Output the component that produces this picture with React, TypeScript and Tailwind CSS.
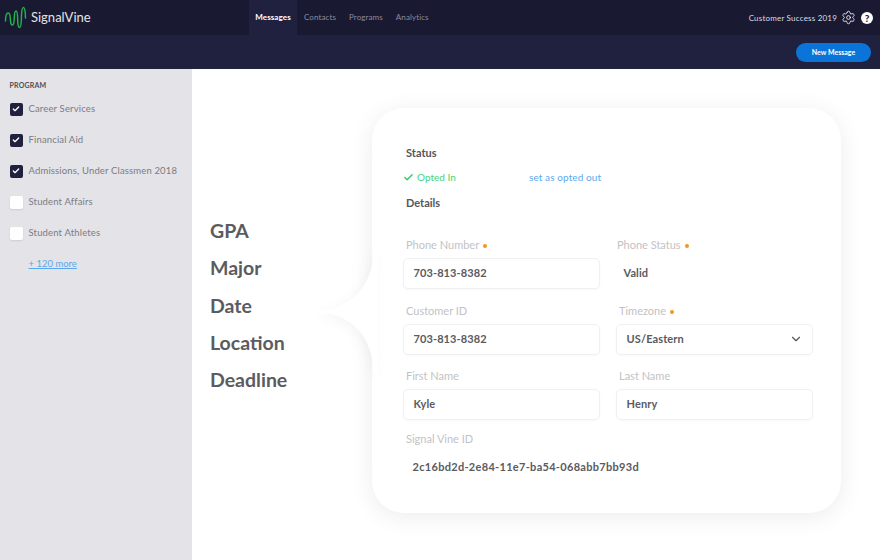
import { Check, ChevronDown, Settings } from 'lucide-react';

const font = { fontFamily: '"Lato", "Open Sans", sans-serif' };

const programs = [
  { name: 'Career Services', checked: true },
  { name: 'Financial Aid', checked: true },
  { name: 'Admissions, Under Classmen 2018', checked: true },
  { name: 'Student Affairs', checked: false },
  { name: 'Student Athletes', checked: false },
];

const tags = ['GPA', 'Major', 'Date', 'Location', 'Deadline'];

function Logo() {
  return (
    <svg width="24" height="24" viewBox="4 6 24 24" fill="none" className="shrink-0">
      <path
        d="M5.5 21 C5.5 15 7 13 8.3 13 C10.5 13 10.3 18 10.5 21 C10.7 24 11.3 25 12.3 25 C13.8 25 14.2 22 14.3 18 C14.4 13 14.8 11 16 11 C17.4 11 17.6 14 17.7 20 C17.8 25 18.3 27.5 19.5 27.5 C21 27.5 21.3 24 21.4 18 C21.5 11 22 7.5 23.5 7.5 C25 7.5 25.3 11 25.5 18"
        stroke="#22b14c"
        strokeWidth="1.5"
        strokeLinecap="round"
      />
    </svg>
  );
}

function Dot() {
  return <span className="ml-1 inline-block h-[4px] w-[4px] rounded-full bg-[#f7941d] align-middle" />;
}

function Field({ label, value, required, select, boxed = true, wide }: { label: string; value: string; required?: boolean; select?: boolean; boxed?: boolean; wide?: boolean }) {
  return (
    <div>
      <div className="mb-[6px] h-[14px] pl-[3px] text-[11px] leading-[14px] text-[#c2c2c6]">
        {label}
        {required && <Dot />}
      </div>
      <div className={`flex h-[31px] items-center justify-between rounded-[5px] pl-[9.5px] pr-[9px] text-[11px] font-bold text-[#5a5a5f] ${wide ? 'tracking-[0.3px]' : 'tracking-[0.1px]'} ${boxed ? 'border border-[#f0f0f2] shadow-[0_1px_2px_rgba(0,0,0,0.03)]' : ''}`}>
        {value}
        {select && <ChevronDown size={14} strokeWidth={2} className="text-[#55555a]" />}
      </div>
    </div>
  );
}

export default function App() {
  return (
    <div style={font} className="flex h-[560px] w-[880px] flex-col overflow-hidden bg-white">
      <header className="flex h-[35px] items-stretch bg-[#191932]">
        <div className="flex w-[249px] items-center gap-[3px] pl-[4px]">
          <Logo />
          <span className="text-[13px] text-[#e4e4e8]">SignalVine</span>
        </div>
        <nav className="flex items-stretch pb-[1px] text-[8px] tracking-[0.1px]">
          <a className="flex w-[48px] -mb-[1px] items-center justify-center bg-[#20203f] pb-[1px] font-bold text-white">Messages</a>
          <a className="ml-[7px] flex items-center text-[#8c8c9c]">Contacts</a>
          <a className="ml-[13px] flex items-center text-[#8c8c9c]">Programs</a>
          <a className="ml-[13px] flex items-center text-[#8c8c9c]">Analytics</a>
        </nav>
        <div className="ml-auto flex items-center pr-[7px]">
          <span className="text-[8px] tracking-[0.2px] text-[#dcdce2]">Customer Success 2019</span>
          <Settings size={15} strokeWidth={1.3} className="ml-[4px] text-white" />
          <span className="ml-[5px] flex h-[12px] w-[12px] items-center justify-center rounded-full bg-white text-[10px] leading-none font-black text-[#191932]">?</span>
        </div>
      </header>

      <div className="flex h-[34px] items-center justify-end bg-[#20203f] pr-[9px]">
        <button className="h-[19px] w-[75px] rounded-full bg-[#0a74d8] text-[7px] font-bold text-white">New Message</button>
      </div>

      <div className="flex min-h-0 flex-1">
        <aside className="w-[192px] shrink-0 bg-[#e3e3e8] pl-[9.5px] pt-[12px]">
          <div className="text-[7px] font-bold leading-[9px] tracking-[0.2px] text-[#4e4e55]">PROGRAM</div>
          <ul className="mt-[13px] flex flex-col gap-[19px]">
            {programs.map((p) => (
              <li key={p.name} className="flex h-[12px] items-center gap-[6px] text-[9.5px] tracking-[0.15px] text-[#7c7c82]">
                {p.checked ? (
                  <span className="flex h-[13px] w-[13px] items-center justify-center rounded-[2px] bg-[#20203f]">
                    <Check size={8} strokeWidth={4} className="text-white" />
                  </span>
                ) : (
                  <span className="h-[13px] w-[13px] rounded-[2px] bg-white shadow-[0_1px_2px_rgba(0,0,0,0.1)]" />
                )}
                {p.name}
              </li>
            ))}
          </ul>
          <a className="mt-[19px] ml-[19px] block text-[9.5px] leading-[12px] text-[#5aa9ee] underline">+ 120 more</a>
        </aside>

        <main className="flex flex-1 items-start">
          <ul className="mt-[151px] flex w-[180px] shrink-0 flex-col gap-[15.3px] pl-[18px] text-[19.5px] leading-[22px] font-bold text-[#5b5b60]">
            {tags.map((t) => (
              <li key={t}>{t}</li>
            ))}
          </ul>

          <section className="relative mt-[39px] h-[405px] w-[469px] rounded-[32px] bg-white pl-[31px] pt-[38px] shadow-[0_4px_24px_rgba(0,0,0,0.08)]">
            <svg width="60" height="122" viewBox="0 0 60 122" className="absolute left-[-54px] top-[143px]" fill="white" style={{ filter: 'drop-shadow(-3px 3px 6px rgba(0,0,0,0.04))' }}>
              <path d="M56 0 C54 34 36 56 0 61 C36 64 54 86 56 122 H60 V0 Z" />
            </svg>
            <div className="relative pl-[3px]">
              <h3 className="text-[11px] leading-[14px] font-bold text-[#55555a]">Status</h3>
              <div className="mt-[10px] flex h-[14px] items-center text-[10px]">
                <Check size={11} strokeWidth={3} className="-ml-[3px] text-[#2fcc66]" />
                <span className="ml-[3px] w-[112px] text-[#48d27a]">Opted In</span>
                <a className="tracking-[0.1px] text-[#5aa9ee]">set as opted out</a>
              </div>
              <h3 className="mt-[12px] text-[11px] leading-[14px] font-bold text-[#55555a]">Details</h3>
            </div>
            <div className="relative mt-[28px] grid w-[410px] grid-cols-2 gap-x-[16px] gap-y-[14.5px]">
              <Field label="Phone Number" value="703-813-8382" required />
              <div className="-ml-[2px]">
                <Field label="Phone Status" value="Valid" required boxed={false} />
              </div>
              <Field label="Customer ID" value="703-813-8382" />
              <Field label="Timezone" value="US/Eastern" required select />
              <Field label="First Name" value="Kyle" />
              <Field label="Last Name" value="Henry" />
            </div>
            <div className="relative mt-[12px] w-[410px]">
              <Field label="Signal Vine ID" value="2c16bd2d-2e84-11e7-ba54-068abb7bb93d" boxed={false} wide />
            </div>
          </section>
        </main>
      </div>
    </div>
  );
}
